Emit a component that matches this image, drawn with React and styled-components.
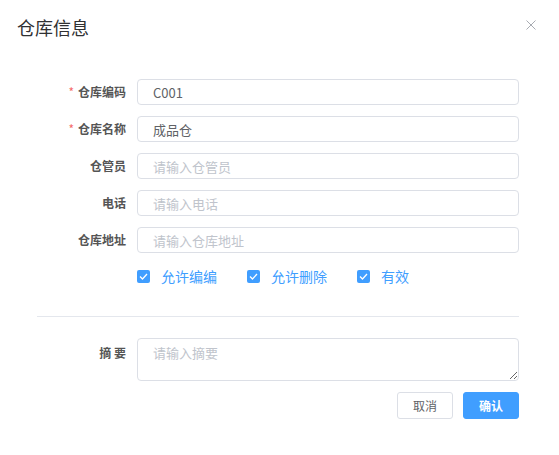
import React from "react";
import styled, { createGlobalStyle } from "styled-components";

const GlobalStyle = createGlobalStyle`
	body {
		margin: 0;
		background: #fff;
		font-family: "Noto Sans CJK SC", "Noto Sans", "Liberation Sans", sans-serif;
	}
	* { box-sizing: border-box; }
`;

const Dialog = styled.div`
	width: 559px;
	height: 455px;
	background: #fff;
`;

const Header = styled.div`
	display: flex;
	align-items: center;
	justify-content: space-between;
	padding: 15px 23px 0 17px;
	height: 39px;
`;

const Title = styled.span`
	font-size: 18px;
	line-height: 24px;
	color: #303133;
`;

const Close = styled.button`
	border: none;
	background: none;
	padding: 0;
	width: 10px;
	height: 10px;
	display: flex;
	cursor: pointer;
	margin-top: -4px;
`;

const Body = styled.div`
	padding: 40px 40px 0 37px;
`;

const Item = styled.div`
	display: flex;
	align-items: ${(p) => (p.top ? "flex-start" : "center")};
	min-height: 26px;
	margin-bottom: ${(p) => p.mb || 11}px;
`;

const Label = styled.label`
	width: 100px;
	padding-right: 11px;
	text-align: right;
	font-size: 12px;
	font-weight: bold;
	color: #555;
	line-height: ${(p) => (p.top ? "30px" : "26px")};
	white-space: pre;
`;

const Star = styled.span`
	color: #f56c6c;
	margin-right: 4px;
	font-weight: normal;
`;

const Input = styled.input`
	flex: 1;
	height: 26px;
	border: 1px solid #dcdfe6;
	border-radius: 4px;
	padding: 0 15px;
	font-size: 13px;
	font-family: inherit;
	color: #606266;
	outline: none;
	&::placeholder {
		color: #c0c4cc;
	}
`;

const TextArea = styled.textarea`
	flex: 1;
	height: 43px;
	border: 1px solid #dcdfe6;
	border-radius: 4px;
	padding: 5px 15px;
	font-size: 13px;
	line-height: 18px;
	font-family: inherit;
	color: #606266;
	outline: none;
	resize: vertical;
	&::placeholder {
		color: #c0c4cc;
	}
`;

const Checks = styled.div`
	display: flex;
	align-items: center;
	gap: 30px;
	height: 26px;
	padding-left: 100px;
	margin-bottom: 27px;
`;

const Check = styled.label`
	display: flex;
	align-items: center;
	font-size: 14px;
	color: #409eff;
	cursor: pointer;
`;

const Box = styled.span`
	width: 13px;
	height: 13px;
	border-radius: 2px;
	background: #409eff;
	display: flex;
	align-items: center;
	justify-content: center;
	margin-right: 11px;
`;

const Divider = styled.div`
	height: 1px;
	background: #e4e7ed;
	margin-bottom: 21px;
`;

const Footer = styled.div`
	display: flex;
	justify-content: flex-end;
	gap: 10px;
	margin-top: 9px;
`;

const Button = styled.button`
	width: 56px;
	height: 27px;
	border-radius: 3px;
	font-size: 12px;
	font-family: inherit;
	cursor: pointer;
	border: 1px solid ${(p) => (p.primary ? "#409eff" : "#dcdfe6")};
	background: ${(p) => (p.primary ? "#409eff" : "#fff")};
	color: ${(p) => (p.primary ? "#fff" : "#606266")};
	font-weight: ${(p) => (p.primary ? "bold" : "normal")};
`;

const CheckMark = () => (
	<svg width="9" height="7" viewBox="0 0 9 7">
		<path d="M1 3.5 L3.5 6 L8 1" fill="none" stroke="#fff" strokeWidth="1.3" />
	</svg>
);

const fields = [
	{ label: "仓库编码", required: true, value: "C001" },
	{ label: "仓库名称", required: true, value: "成品仓" },
	{ label: "仓管员", placeholder: "请输入仓管员" },
	{ label: "电话", placeholder: "请输入电话" },
	{ label: "仓库地址", placeholder: "请输入仓库地址" },
];

const checks = ["允许编编", "允许删除", "有效"];

const App = () => {
	return (
		<Dialog>
			<GlobalStyle />
			<Header>
				<Title>仓库信息</Title>
				<Close aria-label="关闭">
					<svg width="10" height="10" viewBox="0 0 10 10">
						<path d="M0.5 0.5 L9.5 9.5 M9.5 0.5 L0.5 9.5" stroke="#a8abb2" strokeWidth="1" />
					</svg>
				</Close>
			</Header>
			<Body>
				{fields.map((f, i) => (
					<Item key={f.label} mb={i === fields.length - 1 ? 10 : 11}>
						<Label>
							{f.required && <Star>*</Star>}
							{f.label}
						</Label>
						<Input defaultValue={f.value} placeholder={f.placeholder} />
					</Item>
				))}
				<Checks>
					{checks.map((c) => (
						<Check key={c}>
							<Box>
								<CheckMark />
							</Box>
							{c}
						</Check>
					))}
				</Checks>
				<Divider />
				<Item top mb={0}>
					<Label top>摘 要</Label>
					<TextArea placeholder="请输入摘要" />
				</Item>
				<Footer>
					<Button>取消</Button>
					<Button primary>确认</Button>
				</Footer>
			</Body>
		</Dialog>
	);
};

export default App;
